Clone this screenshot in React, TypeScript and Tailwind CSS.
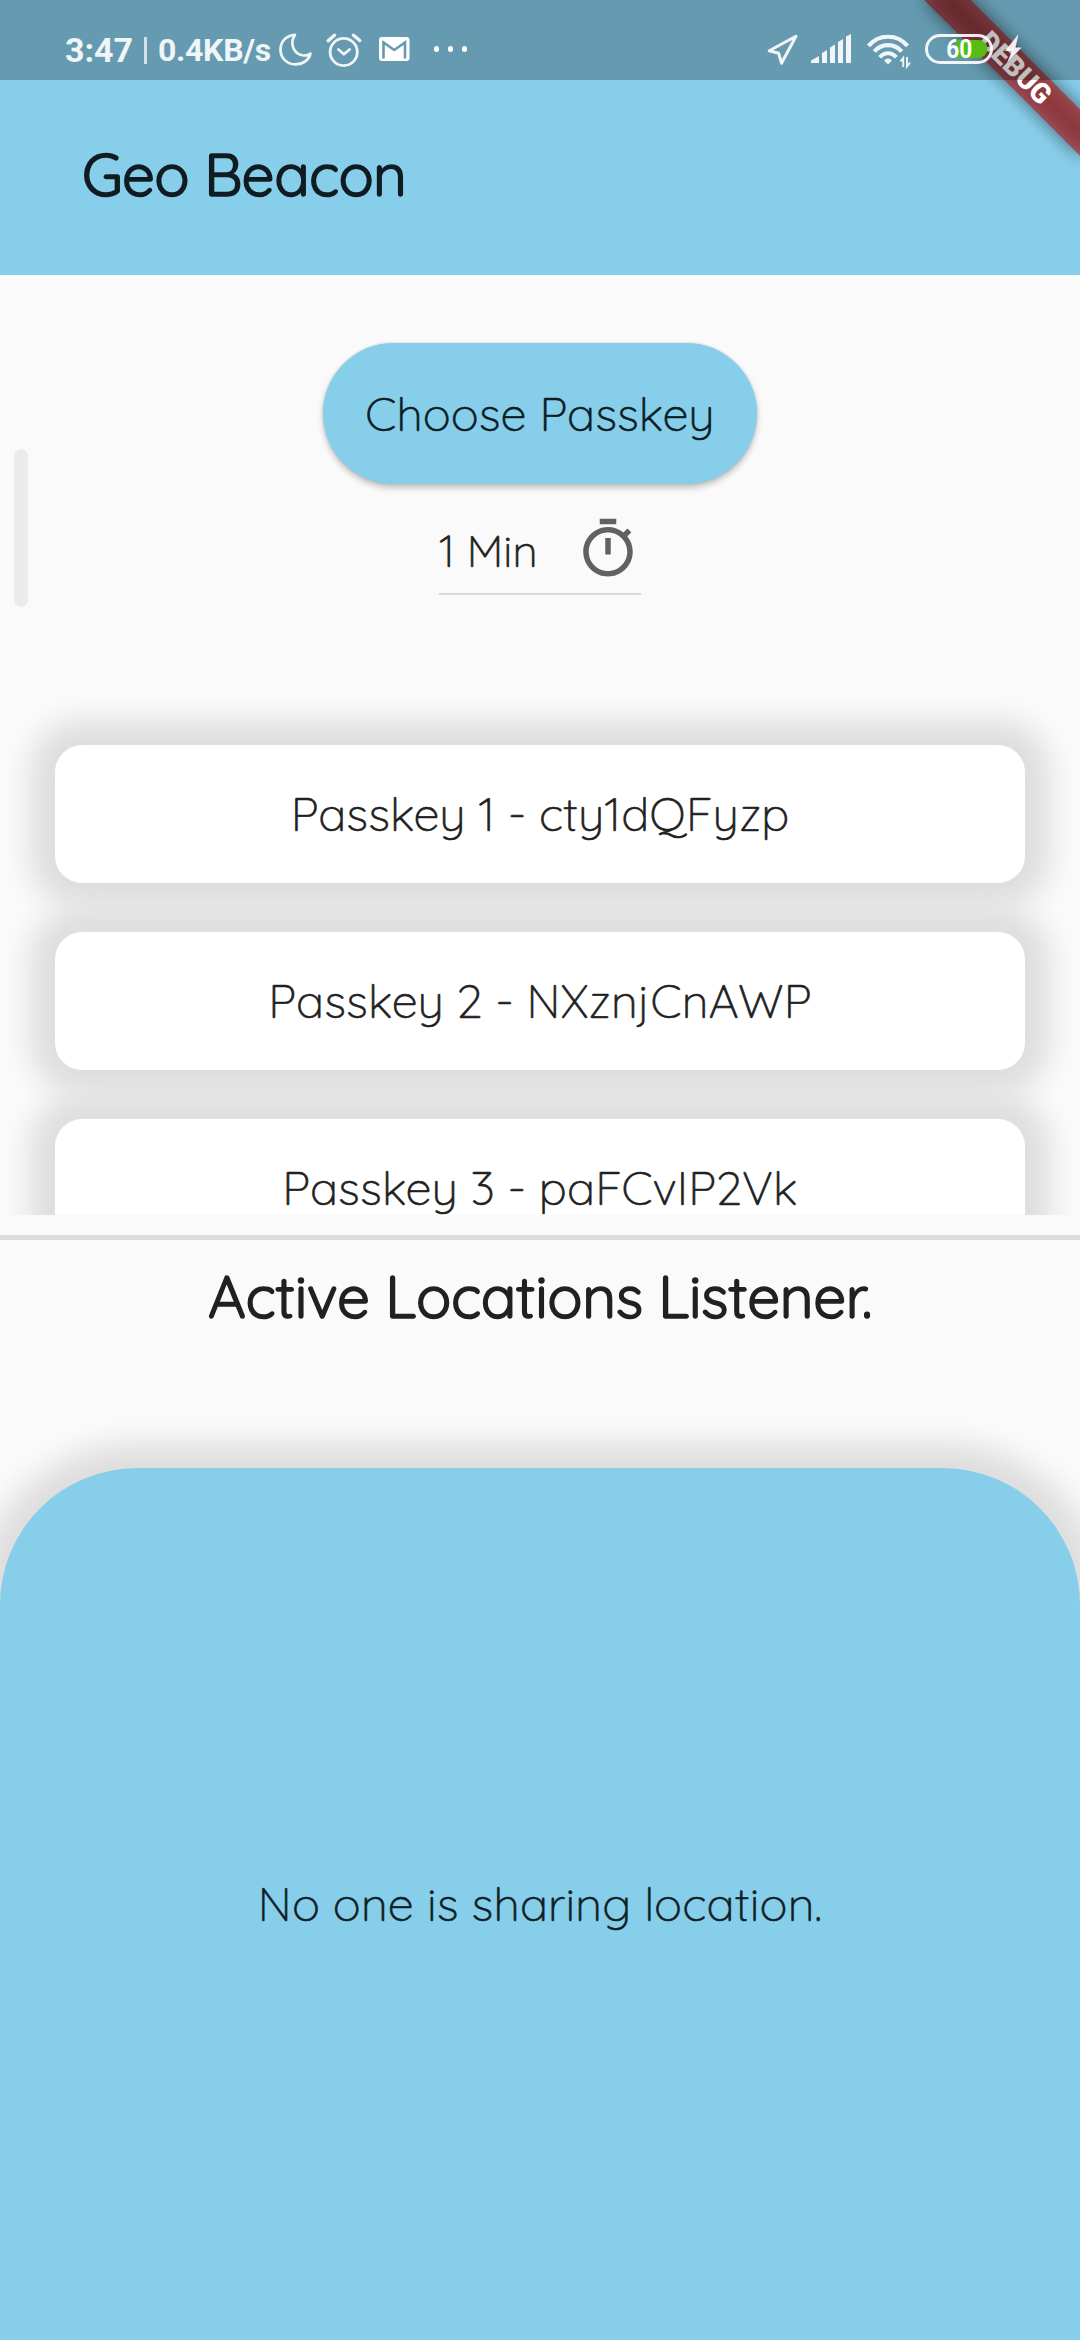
function StatusBar() {
  return (
    <div className="relative z-10 flex h-20 items-start bg-black/25 font-['Roboto',sans-serif] text-white/90">
      <div className="flex h-20 w-[278px] shrink-0 items-center pl-[65px] pt-[20px] whitespace-nowrap">
        <span className="w-[79px] text-[34px] leading-[60px] font-bold">3:47</span>
        <span className="h-[27px] w-[3px] bg-white/70" />
        <span className="ml-[11px] text-[32px] leading-[60px] font-bold tracking-[-0.3px]">0.4KB/s</span>
      </div>
      <svg className="mt-8 h-9 w-9 shrink-0" viewBox="0 0 36 36" fill="none" stroke="currentColor" strokeWidth="2.7" strokeLinejoin="round">
        <path d="M17 2.8C8 3.2 2.5 9.7 2.5 17.8S9 32.4 17.3 32.4C25 32.4 31 28 32.4 21.6C30.5 23 28 23.6 25.5 23.5C16 22.5 11 12 17 2.8Z" />
      </svg>
      <svg className="mt-8 ml-[11px] h-9 w-[38px] shrink-0" viewBox="0 0 38 36" fill="none" stroke="currentColor" strokeWidth="2.8" strokeLinecap="round" strokeLinejoin="round">
        <circle cx="18.7" cy="20" r="13.6" />
        <path d="M13.5 17.5L18.9 22.2L24.6 17.5" />
        <path d="M3.2 8.8L9.5 3.2M28.5 3.2L34.8 8.5" strokeWidth="3.4" />
      </svg>
      <svg className="mt-[37px] ml-[16px] h-6 w-[31px] shrink-0" viewBox="0 0 31 24" fill="none">
        <rect width="30.5" height="24" rx="3" fill="white" />
        <path d="M4.5 21.5V5.5L15.2 13L26 5.5V21.5" stroke="#659ab0" strokeWidth="2.6" />
      </svg>
      <div className="mt-[46px] ml-[24px] flex gap-[9px]">
        <span className="h-1.5 w-[5px] rounded-full bg-white" />
        <span className="h-1.5 w-[5px] rounded-full bg-white" />
        <span className="h-1.5 w-[5px] rounded-full bg-white" />
      </div>

      <div className="ml-auto flex items-start pr-[58px]">
        <svg className="mt-8 h-9 w-9" viewBox="0 0 36 36" fill="none" stroke="currentColor" strokeWidth="3" strokeLinejoin="round">
          <path d="M31 4.2L4.2 18.7L13.7 21.3L16.5 31.2Z" />
        </svg>
        <svg className="mt-[34px] ml-[10px] h-[29px] w-10" viewBox="0 0 40 29" fill="currentColor">
          <path d="M0 29V26.5L8 22V29ZM11 29V19L16 16V29ZM19 29V13.5L24 10.5V29ZM27 29V8L32 5V29ZM35 29V2.5L40 0V29Z" />
        </svg>
        <svg className="mt-[33px] ml-[15px] h-9 w-[46px]" viewBox="0 0 46 36" fill="none" stroke="currentColor" strokeWidth="4.2">
          <path d="M2.5 12.8A25.5 25.5 0 0 1 41.5 12.8" />
          <path d="M8.3 18.5A17.8 17.8 0 0 1 35.7 18.5" />
          <path d="M13.8 24.2A10.5 10.5 0 0 1 30.2 24.2" />
          <path d="M18 27.5Q22 23.5 26 27.5L22 31.5Z" fill="currentColor" stroke="none" />
          <path d="M37.2 34V25L34.5 28.5M41 24V33.5L44 29.5" strokeWidth="1.9" />
        </svg>
        <svg className="mt-[34px] ml-[13px] h-[30px] w-[68px]" viewBox="0 0 68 30">
          <path d="M31.5 6H53.5A9 9 0 0 1 53.5 24H31.5Z" fill="#56bc14" />
          <rect x="1.5" y="1.5" width="65" height="27" rx="13.5" fill="none" stroke="currentColor" strokeWidth="3" />
          <text x="34.3" y="23.8" textAnchor="middle" fontSize="25" fontWeight="700" textLength="26" lengthAdjust="spacingAndGlyphs" fill="white">60</text>
        </svg>
        <svg className="mt-[34px] ml-[12px] h-[29px] w-[17px]" viewBox="0 0 17 29" fill="currentColor">
          <path d="M13.5 0L0 17H7L2 29L16.5 13.5H10.5Z" />
        </svg>
      </div>
    </div>
  );
}

function DebugBanner() {
  return (
    <div className="pointer-events-none absolute top-0 right-0 h-60 w-60 overflow-hidden">
      <div className="absolute top-[49.5px] right-[-44px] h-[33px] w-[220px] rotate-45">
        <div className="absolute inset-0 bg-black/50 blur-[9px]" />
        <div className="absolute inset-0 flex items-center justify-center bg-[#b71c1c]/63 pl-1 font-['Roboto',sans-serif] text-[28px] leading-none font-black text-white">
          DEBUG
        </div>
      </div>
    </div>
  );
}

const passkeys = [
  { label: "Passkey 1 - cty1dQFyzp", tracking: "tracking-[0.06px]" },
  { label: "Passkey 2 - NXznjCnAWP", tracking: "tracking-[0.18px]" },
  { label: "Passkey 3 - paFCvIP2Vk", tracking: "tracking-[0.15px]" },
];

export default function App() {
  return (
    <div className="relative flex h-[2340px] w-[1080px] flex-col overflow-hidden bg-[#fafafa] font-['Quicksand','Lato',sans-serif] text-[#212121]">
      <header className="relative h-[275px] shrink-0 bg-[#87ceeb]">
        <DebugBanner />
        <StatusBar />
        <h1 className="pt-[60px] pl-[82px] text-[58.5px] leading-[68px] font-normal tracking-[-0.7px] text-[#101c21] [-webkit-text-stroke:1.6px_currentColor]">
          Geo Beacon
        </h1>
      </header>

      <div className="flex shrink-0 flex-col items-center pt-[68px]">
        <button className="h-[140.5px] w-[434px] rounded-full bg-[#87ceeb] pt-[2px] text-[46.75px] leading-none font-light tracking-[0.1px] text-[#0b1c23] shadow-[0_4px_6px_rgba(0,0,0,0.22),0_0_3px_rgba(0,0,0,0.14)] [-webkit-text-stroke:0.6px_currentColor]">
          Choose Passkey
        </button>
        <div className="mt-[32.5px] flex h-[79px] w-[202px] items-start justify-between border-b-2 border-[#dadada]">
          <span className="pt-[5px] text-[44px] leading-[60px] font-light whitespace-nowrap [-webkit-text-stroke:0.6px_currentColor]">1 Min</span>
          <svg className="h-[66px] w-[66px]" viewBox="0 0 24 24" fill="#616161">
            <path d="M15 1H9v2h6V1zm-4 13h2V8h-2v6zm8.030-6.610l1.420-1.420c-.430-.510-.900-.990-1.410-1.410l-1.420 1.420C16.070 4.740 14.120 4 12 4c-4.970 0-9 4.030-9 9s4.020 9 9 9 9-4.030 9-9c0-2.120-.740-4.070-1.970-5.610zM12 20c-3.870 0-7-3.130-7-7s3.130-7 7-7 7 3.130 7 7-3.130 7-7 7z" />
          </svg>
        </div>
      </div>

      <ul className="flex h-[620px] shrink-0 flex-col gap-[49.5px] overflow-hidden px-[55px] pt-[150px]">
        {passkeys.map((p) => (
          <li key={p.label} className="flex h-[137.5px] shrink-0 items-center justify-center rounded-[27px] bg-white pt-[2px] shadow-[0_0_28px_25px_#dedede]">
            <span className={`text-[46.75px] leading-none font-light [-webkit-text-stroke:0.6px_currentColor] ${p.tracking}`}>{p.label}</span>
          </li>
        ))}
      </ul>

      <div className="mt-[19.5px] h-[5.5px] shrink-0 bg-[#dcdcdc]" />
      <h2 className="h-[114px] shrink-0 text-center text-[58.5px] leading-[112px] font-normal tracking-[-0.42px] [-webkit-text-stroke:1.6px_currentColor]">
        Active Locations Listener.
      </h2>

      <section className="mt-[114px] flex flex-1 items-center justify-center rounded-t-[137px] bg-[#87ceeb] shadow-[0_0_28px_25px_#dedede]">
        <p className="pt-px text-[46.75px] leading-none font-light tracking-[0.2px] text-[#0f1e24] [-webkit-text-stroke:0.6px_currentColor]">No one is sharing location.</p>
      </section>

      <div className="absolute top-[449px] left-[14px] h-[158px] w-[14px] rounded-full bg-[#ebebeb]" />
    </div>
  );
}
